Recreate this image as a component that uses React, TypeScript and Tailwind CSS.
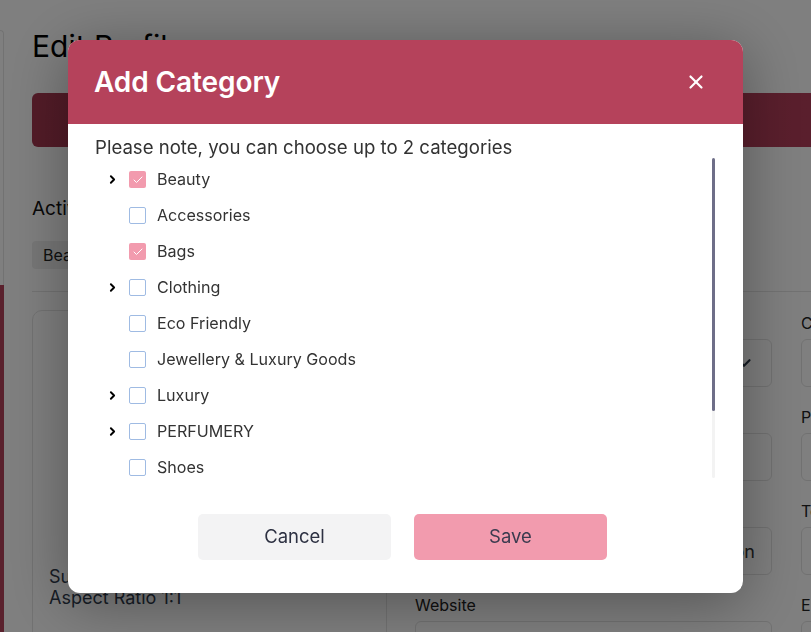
import { X, ChevronRight, ChevronDown, Check } from "lucide-react";

const CATEGORIES = [
  { name: "Beauty", checked: true, expandable: true },
  { name: "Accessories", checked: false, expandable: false },
  { name: "Bags", checked: true, expandable: false },
  { name: "Clothing", checked: false, expandable: true },
  { name: "Eco Friendly", checked: false, expandable: false },
  { name: "Jewellery & Luxury Goods", checked: false, expandable: false },
  { name: "Luxury", checked: false, expandable: true },
  { name: "PERFUMERY", checked: false, expandable: true },
  { name: "Shoes", checked: false, expandable: false },
];

function Field({ label, select, value }: { label: string; select?: boolean; value?: string }) {
  return (
    <div className="flex flex-col gap-[6px]">
      <span className="text-[16px] text-[#222] leading-[20px]">{label}</span>
      <div className="h-[48px] rounded-[6px] border border-[#e3e3e3] flex items-center justify-end px-[16px] text-[18px] text-[#333]">
        {select && <ChevronDown size={22} strokeWidth={2.4} className="text-[#2d3a4a]" />}
        {value}
      </div>
    </div>
  );
}

function Page() {
  return (
    <div className="flex h-screen overflow-hidden bg-white font-['Inter',sans-serif]">
      {/* sidebar edge */}
      <div className="w-[4px] shrink-0 flex flex-col pt-[30px]">
        <div className="h-[255px] border-r border-t border-[#e5e5e5] rounded-tr-[10px]" />
        <div className="flex-1 bg-[#b5425b]" />
      </div>

      <div className="flex-1 pl-[28px] pt-[28px] min-w-0 overflow-hidden">
        <h1 className="text-[30px] leading-[36px] text-black">Edit Profile</h1>
        <div className="mt-[29px] h-[54px] rounded-l-[6px] bg-gradient-to-r from-[#a63850] to-[#b53e5a]" />
        <div className="mt-[50px] text-[19px] leading-[24px] text-[#111]">Active Categories</div>
        <div className="mt-[20px] inline-flex h-[28px] items-center px-[11px] rounded-[4px] bg-[#eeeeee] text-[16px] text-[#222]">
          Beauty
        </div>
        <div className="mt-[22px] border-t border-[#e5e5e5]" />
        <div className="mt-[18px] flex gap-[28px]">
          <div className="w-[355px] shrink-0 h-[340px] rounded-[10px] border border-[#e5e5e5] flex flex-col justify-end px-[16px] pb-[41px]">
            <div className="text-[18px] leading-[21px] text-[#2f3b4c]">Suggested Size 500x500</div>
            <div className="text-[18px] leading-[21px] text-[#2f3b4c]">Aspect Ratio 1:1</div>
          </div>
          <div className="flex shrink-0 gap-[29px] pt-[3px]">
            <div className="w-[357px] shrink-0 flex flex-col gap-[20px]">
              <Field label="Category" select />
              <Field label="Phone" />
              <Field label="Location" value="London" />
              <Field label="Website" />
            </div>
            <div className="w-[300px] shrink-0 flex flex-col gap-[20px]">
              <Field label="City" />
              <Field label="Postcode" />
              <Field label="Telephone" />
              <Field label="Email" />
            </div>
          </div>
        </div>
      </div>
    </div>
  );
}

export default function App() {
  return (
    <div className="relative">
      <Page />
      <div className="fixed inset-0 bg-black/50 flex items-center justify-center font-['Inter',sans-serif]">
        <div className="w-[675px] h-[553px] rounded-[12px] bg-white overflow-hidden flex flex-col shadow-[0_10px_60px_rgba(0,0,0,0.35)]">
          <div className="h-[84px] shrink-0 bg-[#b5425b] flex items-center justify-between pl-[26px] pr-[36px]">
            <h2 className="text-[28px] font-semibold text-white tracking-[-0.1px]">Add Category</h2>
            <X size={22} strokeWidth={2.4} className="text-white" />
          </div>
          <div className="flex-1 flex flex-col pl-[27px] pr-[27px]">
            <p className="mt-[12px] text-[18.6px] leading-[22px] text-[#333]">
              Please note, you can choose up to 2 categories
            </p>
            <div className="flex items-start">
              <ul className="flex-1 h-[320px] overflow-hidden pl-[13px] pt-[4px]">
                {CATEGORIES.map((c) => (
                  <li key={c.name} className="h-[36px] flex items-center">
                    <span className="w-[21px] flex items-center">
                      {c.expandable && <ChevronRight size={13} strokeWidth={3.5} className="-ml-[2px] text-black" />}
                    </span>
                    <span
                      className={
                        c.checked
                          ? "w-[17px] h-[17px] rounded-[2px] bg-[#f29bae] flex items-center justify-center"
                          : "w-[17px] h-[17px] rounded-[2px] border border-[#9fbbe3] bg-white"
                      }
                    >
                      {c.checked && <Check size={12} strokeWidth={2} className="text-white" />}
                    </span>
                    <span className="ml-[11px] text-[16.1px] text-[#333]">{c.name}</span>
                  </li>
                ))}
              </ul>
              <div className="w-[3px] h-[320px] bg-[#f3f3f3] rounded-full mr-[1px]">
                <div className="h-[253px] bg-[#6e6e88] rounded-full" />
              </div>
            </div>
            <div className="mt-[36px] flex justify-center gap-[23px] pr-[6px]">
              <button className="w-[193px] h-[46px] rounded-[5px] bg-[#f3f3f4] text-[18.5px] text-[#2d3142]">
                Cancel
              </button>
              <button className="w-[193px] h-[46px] rounded-[5px] bg-[#f29bae] text-[18.5px] text-[#3b3b4f]">
                Save
              </button>
            </div>
          </div>
        </div>
      </div>
    </div>
  );
}
